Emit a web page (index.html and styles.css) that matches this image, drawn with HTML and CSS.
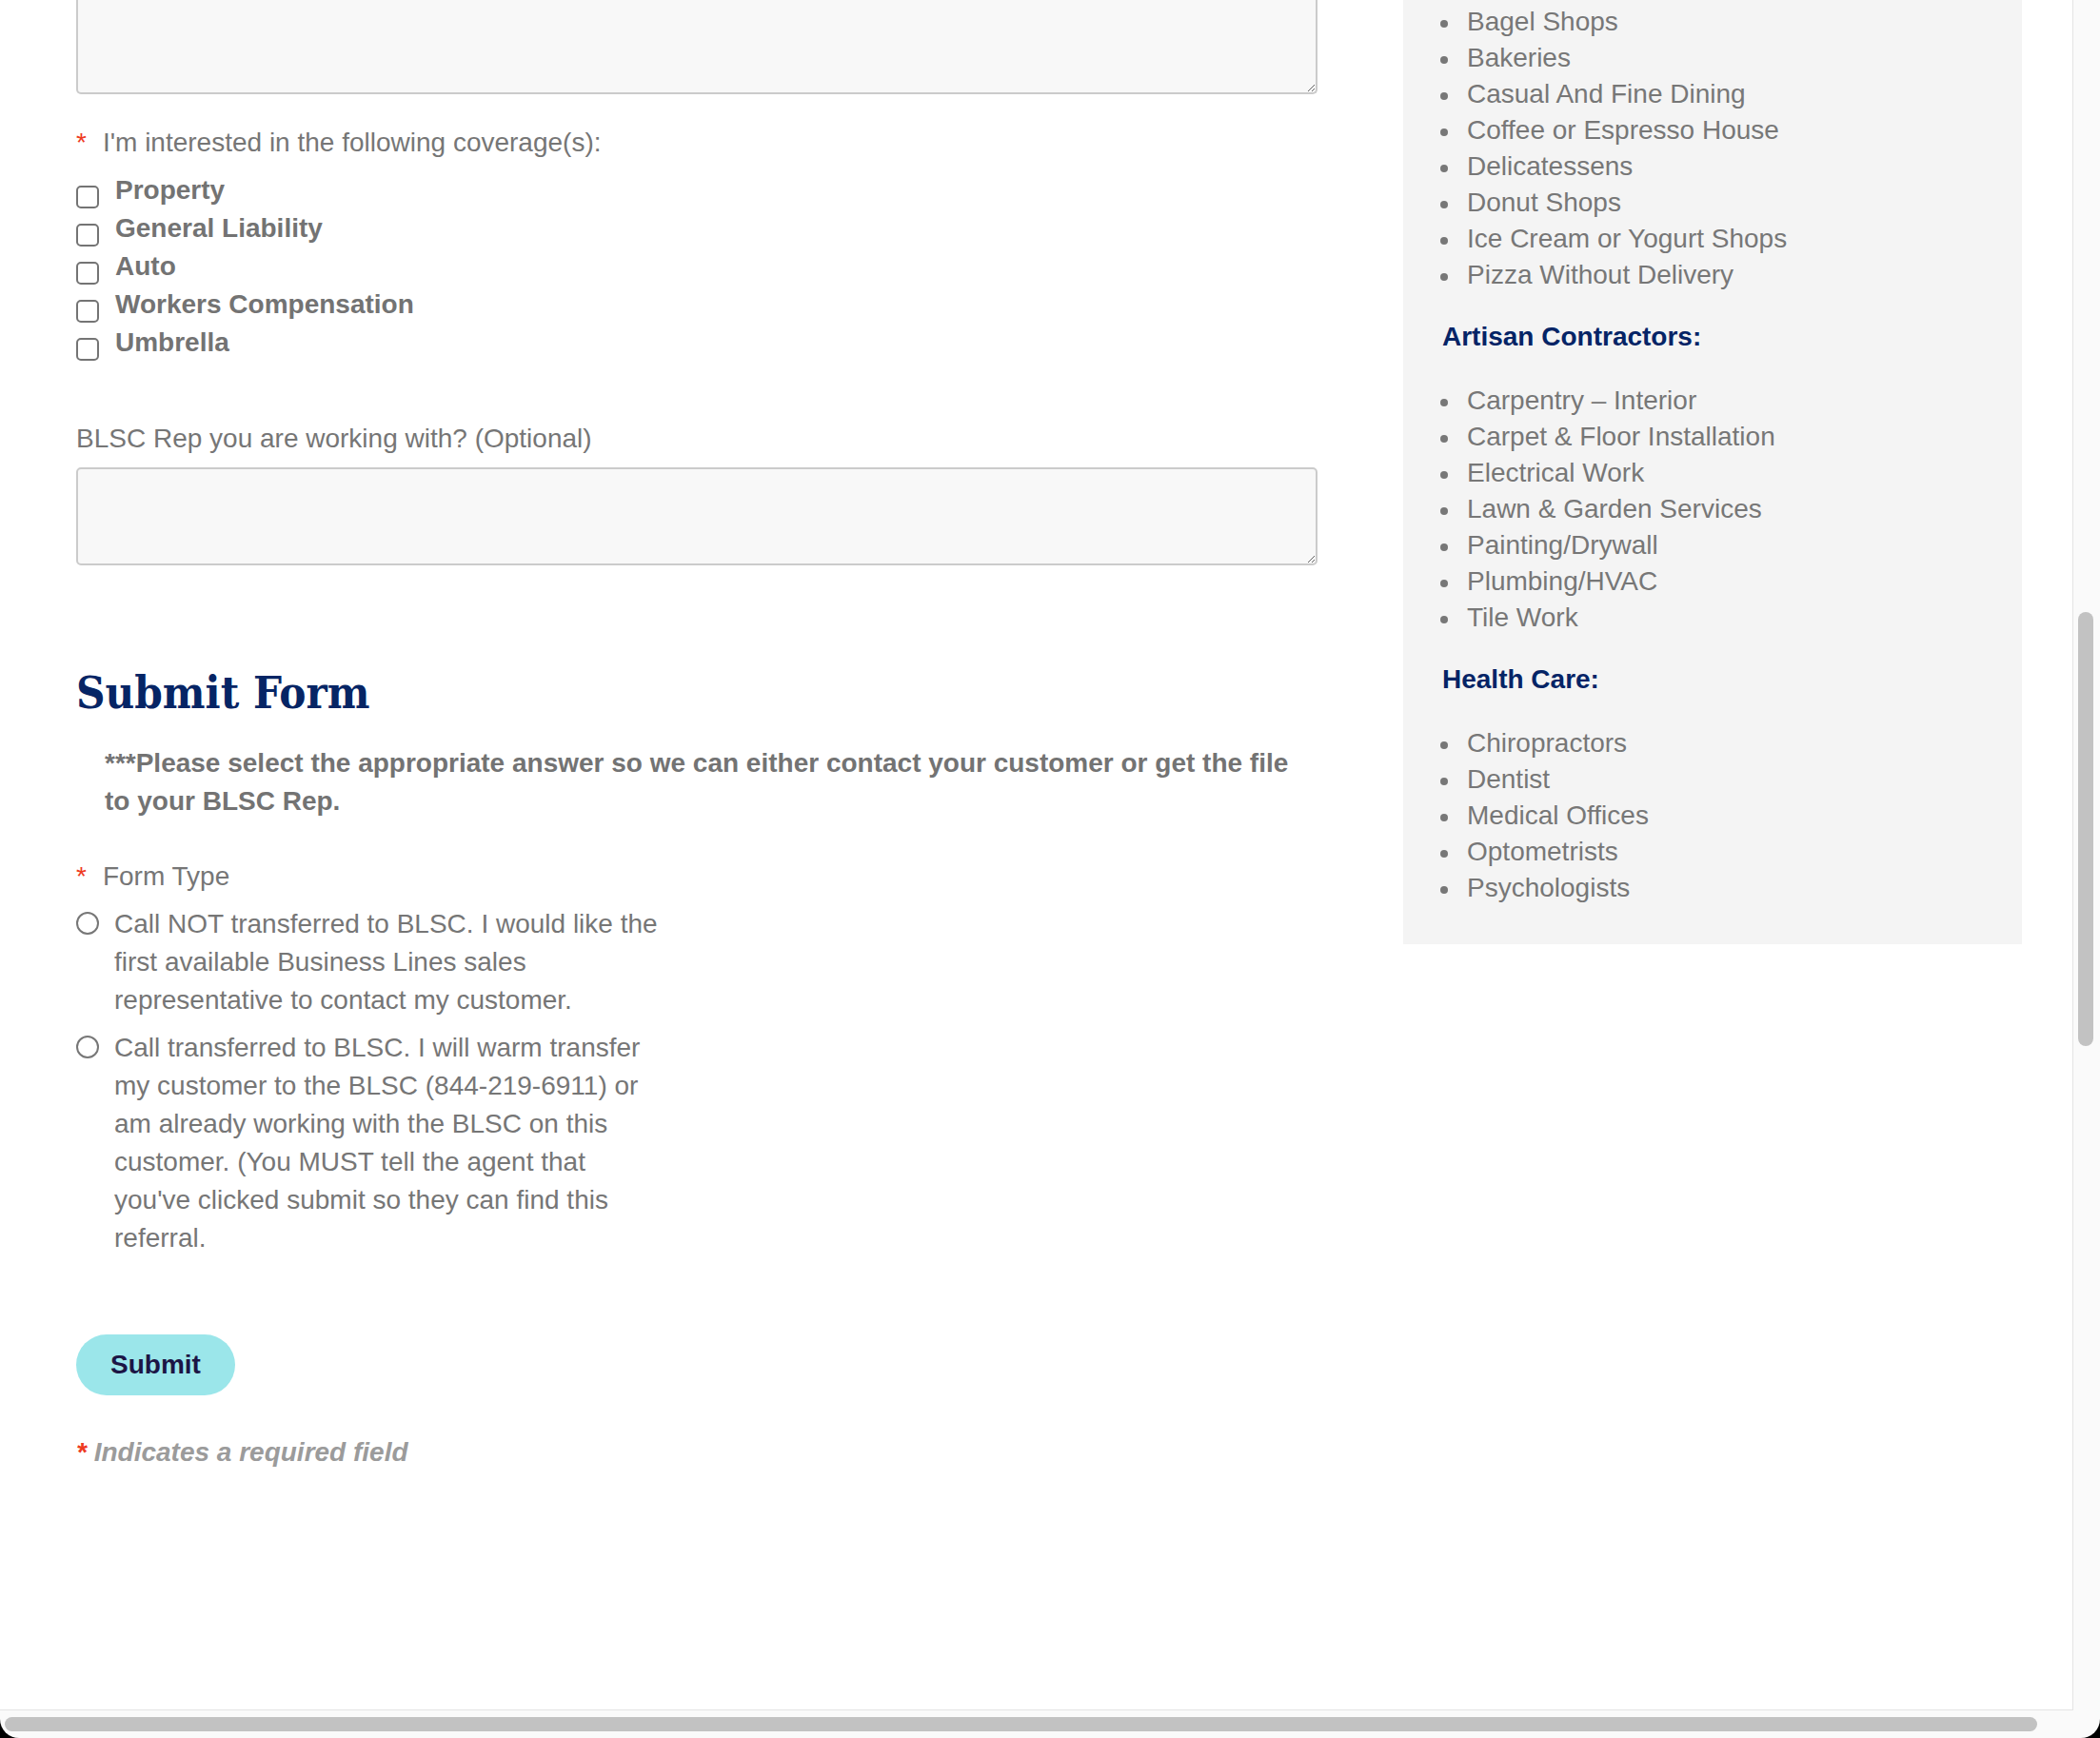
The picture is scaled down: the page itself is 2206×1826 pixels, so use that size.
FILE: index.html
```html
<!DOCTYPE html>
<html lang="en">
<head>
<meta charset="utf-8">
<title>Submit Form</title>
<link rel="stylesheet" href="styles.css">
</head>
<body>
<div class="window">
  <div class="frame">
    <div class="page">
      <main class="form-col">
        <textarea class="field-area field-area--cut"></textarea>

        <div class="field coverage">
          <div class="field-label"><span class="req">*</span>I'm interested in the following coverage(s):</div>
          <ul class="checks">
            <li><label class="check"><input type="checkbox"><span>Property</span></label></li>
            <li><label class="check"><input type="checkbox"><span>General Liability</span></label></li>
            <li><label class="check"><input type="checkbox"><span>Auto</span></label></li>
            <li><label class="check"><input type="checkbox"><span>Workers Compensation</span></label></li>
            <li><label class="check"><input type="checkbox"><span>Umbrella</span></label></li>
          </ul>
        </div>

        <div class="field rep">
          <label class="field-label">BLSC Rep you are working with? (Optional)</label>
          <textarea class="field-area field-area--rep"></textarea>
        </div>

        <h2 class="section-title">Submit Form</h2>
        <p class="note">***Please select the appropriate answer so we can either contact your customer or get the file to your BLSC Rep.</p>

        <div class="field formtype">
          <div class="field-label"><span class="req">*</span>Form Type</div>
          <div class="radios">
            <label class="radio"><input type="radio" name="formtype"><span>Call NOT transferred to BLSC. I would like the first available Business Lines sales representative to contact my customer.</span></label>
            <label class="radio"><input type="radio" name="formtype"><span>Call transferred to BLSC. I will warm transfer my customer to the BLSC (844-219-6911) or am already working with the BLSC on this customer. (You MUST tell the agent that you've clicked submit so they can find this referral.</span></label>
          </div>
        </div>

        <button class="submit" type="button">Submit</button>

        <p class="required-note"><span class="req">*</span> Indicates a required field</p>
      </main>

      <aside class="sidebar">
        <ul class="biz-list">
          <li>Bagel Shops</li>
          <li>Bakeries</li>
          <li>Casual And Fine Dining</li>
          <li>Coffee or Espresso House</li>
          <li>Delicatessens</li>
          <li>Donut Shops</li>
          <li>Ice Cream or Yogurt Shops</li>
          <li>Pizza Without Delivery</li>
        </ul>
        <h3 class="biz-head">Artisan Contractors:</h3>
        <ul class="biz-list">
          <li>Carpentry – Interior</li>
          <li>Carpet &amp; Floor Installation</li>
          <li>Electrical Work</li>
          <li>Lawn &amp; Garden Services</li>
          <li>Painting/Drywall</li>
          <li>Plumbing/HVAC</li>
          <li>Tile Work</li>
        </ul>
        <h3 class="biz-head">Health Care:</h3>
        <ul class="biz-list">
          <li>Chiropractors</li>
          <li>Dentist</li>
          <li>Medical Offices</li>
          <li>Optometrists</li>
          <li>Psychologists</li>
        </ul>
      </aside>
    </div>
    <div class="vscroll"><div class="vthumb" style="margin-top:643px;height:456px"></div></div>
  </div>
  <div class="hscroll"><div class="hthumb" style="width:2135px"></div></div>
</div>
</body>
</html>
```

FILE: styles.css
```css
html, body {
  margin: 0;
  padding: 0;
  background: #000;
}

body {
  font-family: "Liberation Sans", Arial, sans-serif;
  font-size: 28px;
  line-height: 40px;
  color: #767676;
  overflow: hidden;
}

.window {
  width: 2206px;
  height: 1826px;
  background: #fafafa;
  border-radius: 0 0 20px 20px;
  overflow: hidden;
  display: flex;
  flex-direction: column;
}

.frame {
  display: flex;
  height: 1797px;
  flex-shrink: 0;
}

.page {
  width: 2178px;
  height: 1797px;
  box-sizing: border-box;
  background: #fff;
  border-right: 1px solid #e4e4e4;
  border-bottom: 1px solid #e4e4e4;
  overflow: hidden;
  display: flex;
  align-items: flex-start;
  gap: 90px;
  padding-left: 80px;
  flex-shrink: 0;
}

/* ---------- form column ---------- */
.form-col {
  width: 1304px;
  flex-shrink: 0;
}

.field-area {
  display: block;
  width: 100%;
  box-sizing: border-box;
  margin: 0;
  background: #f8f8f8;
  border: 2px solid #cbcbcb;
  border-radius: 5px;
  font: inherit;
  color: #555;
}

.field-area--cut {
  height: 99px;
  border-top: none;
  border-radius: 0 0 5px 5px;
}

.field-area--rep {
  height: 103px;
  margin-top: 10px;
}

.field-label {
  display: block;
  color: #767676;
}

.req {
  color: #ee3b1f;
  margin-right: 17px;
}

.coverage {
  margin-top: 31px;
}

.checks {
  list-style: none;
  margin: 10px 0 0;
  padding: 0;
}

.check {
  display: flex;
  align-items: flex-start;
  gap: 17px;
  font-weight: bold;
  color: #737373;
}

.check input {
  appearance: none;
  -webkit-appearance: none;
  box-sizing: border-box;
  width: 24px;
  height: 24px;
  margin: 15px 0 0;
  border: 2px solid #747474;
  border-radius: 5px;
  background: #fff;
  flex-shrink: 0;
}

.rep {
  margin-top: 61px;
}

.section-title {
  margin: 106px 0 0;
  font-family: "DejaVu Serif Condensed", "DejaVu Serif", serif;
  font-stretch: condensed;
  font-weight: bold;
  font-size: 47px;
  line-height: 56px;
  color: #062565;
}

.note {
  margin: 26px 0 0;
  padding-left: 30px;
  font-weight: bold;
  color: #737373;
}

.formtype {
  margin-top: 39px;
}

.radios {
  margin-top: 10px;
}

.radio {
  display: flex;
  align-items: flex-start;
  gap: 16px;
}

.radio + .radio {
  margin-top: 10px;
}

.radio span {
  width: 578px;
}

.radio input {
  appearance: none;
  -webkit-appearance: none;
  box-sizing: border-box;
  width: 24px;
  height: 24px;
  margin: 7px 0 0;
  border: 2px solid #777;
  border-radius: 50%;
  background: #fff;
  flex-shrink: 0;
}

.submit {
  display: block;
  margin-top: 81px;
  height: 64px;
  padding: 0 36px;
  border: none;
  border-radius: 32px;
  background: #9be6ea;
  color: #1c1545;
  font-family: "Liberation Sans", Arial, sans-serif;
  font-weight: bold;
  font-size: 28px;
  line-height: 64px;
}

.required-note {
  margin: 40px 0 0;
  font-style: italic;
  font-weight: bold;
  color: #9b9b9b;
}

.required-note .req {
  margin-right: 0;
}

/* ---------- sidebar ---------- */
.sidebar {
  width: 650px;
  flex-shrink: 0;
  box-sizing: border-box;
  background: #f4f4f4;
  padding: 4px 0 40px 41px;
}

.biz-list {
  list-style: none;
  margin: 0;
  padding: 0;
  line-height: 38px;
  color: #777;
}

.biz-list li {
  display: flex;
  align-items: center;
}

.biz-list li::before {
  content: "";
  width: 8px;
  height: 8px;
  border-radius: 50%;
  background: #777;
  margin: 3px 20px 0 -2px;
  flex-shrink: 0;
}

.biz-head {
  margin: 27px 0 29px;
  font-size: 28px;
  line-height: 38px;
  font-weight: bold;
  color: #052466;
}

/* ---------- scrollbars ---------- */
.vscroll {
  width: 28px;
  flex-shrink: 0;
}

.vthumb {
  width: 16px;
  margin-left: 5px;
  border-radius: 8px;
  background: #c2c2c2;
}

.hscroll {
  height: 29px;
  box-sizing: border-box;
  padding: 7px 0 0 5px;
}

.hthumb {
  height: 15px;
  border-radius: 8px;
  background: #c2c2c2;
}
```
